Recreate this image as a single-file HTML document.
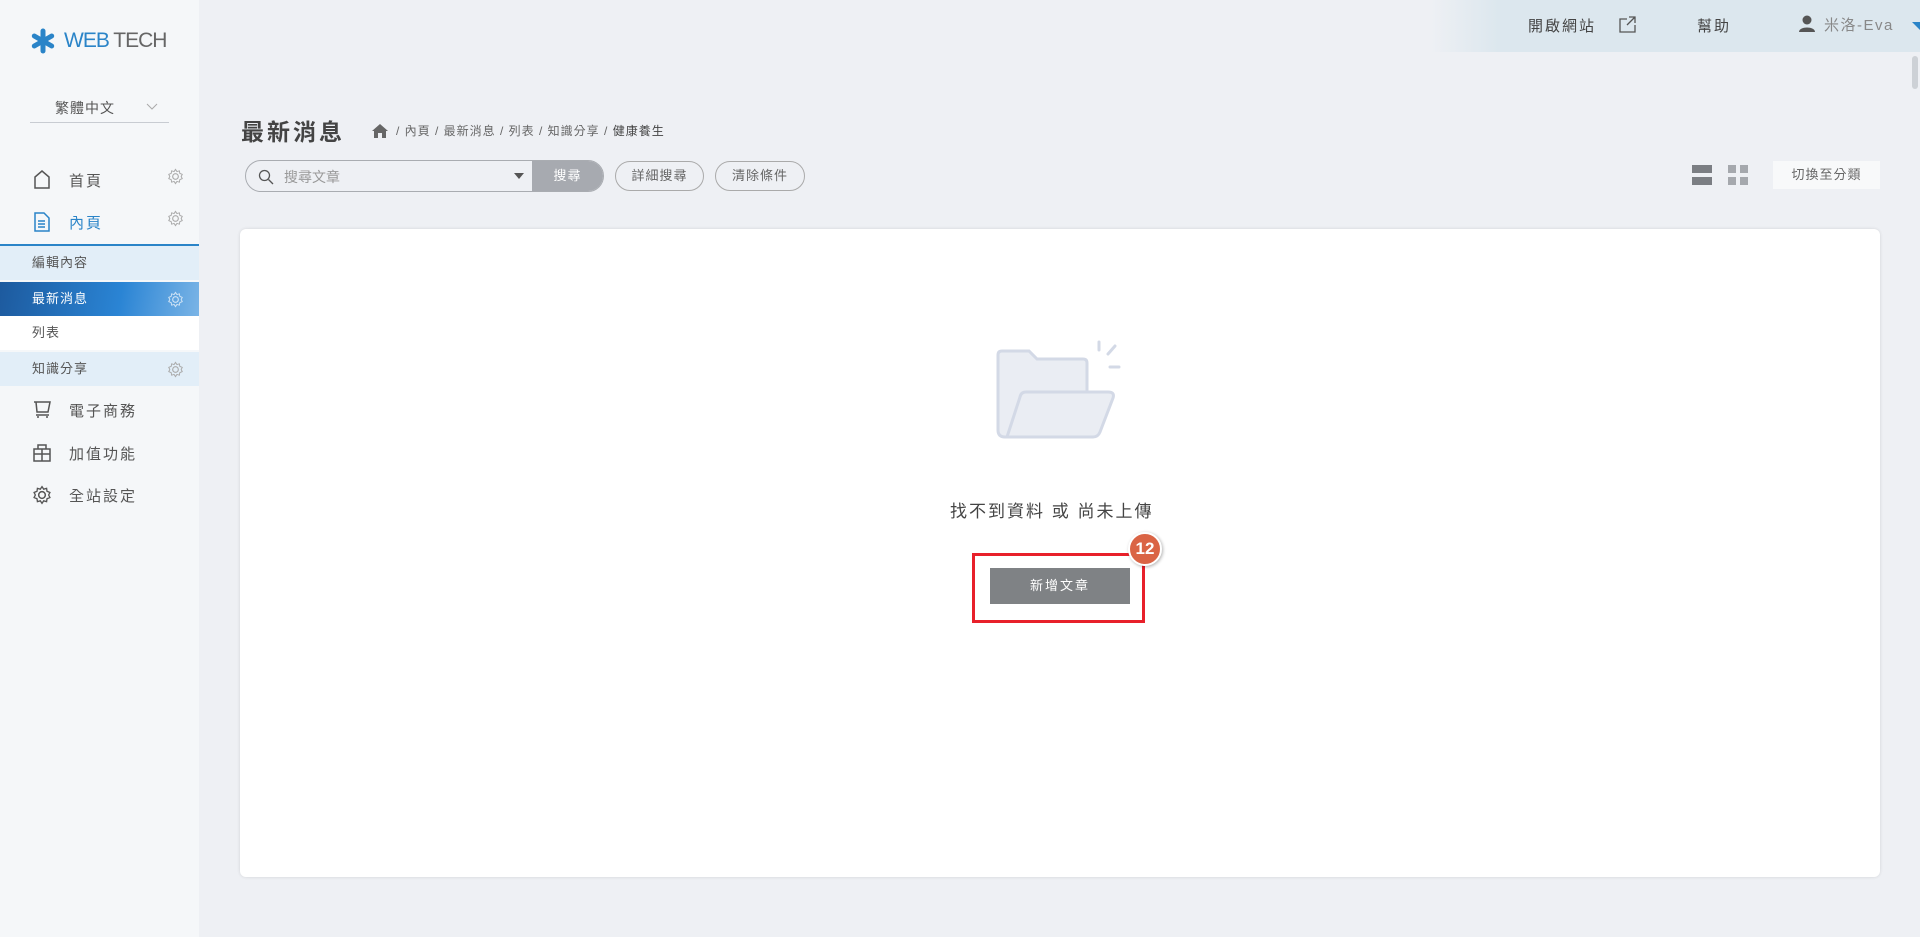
<!DOCTYPE html>
<html><head><meta charset="utf-8"><style>
*{margin:0;padding:0;box-sizing:border-box}
body{width:1920px;height:937px;overflow:hidden;background:#eef0f4;font-family:"Liberation Sans","Noto Sans CJK TC",sans-serif;color:#555;position:relative}
.a{position:absolute}
.side{left:0;top:0;width:199px;height:937px;background:#f5f7f9}
.mi{position:absolute;left:0;width:199px;font-size:15px;color:#555;letter-spacing:2px}
.mi .t{position:absolute;left:69px;top:0}
.sub{position:absolute;left:0;width:199px;height:34px;font-size:13px;line-height:34px;padding-left:32px;letter-spacing:1px;color:#555}
.pill{position:absolute;height:30px;border:1px solid #aaa;border-radius:15px;font-size:13px;line-height:28px;text-align:center;color:#666;letter-spacing:1px}
</style></head><body>
<div class="a side"></div>
<svg class="a" style="left:30px;top:28px" width="26" height="26" viewBox="0 0 26 26"><g stroke="#2a84c8" stroke-width="5" stroke-linecap="round"><line x1="13" y1="3" x2="13" y2="23"/><line x1="4.3" y1="8" x2="21.7" y2="18"/><line x1="4.3" y1="18" x2="21.7" y2="8"/></g></svg>
<div class="a" style="left:64px;top:29px;font-size:21px;color:#2a84c8;letter-spacing:-1px">WEB <span style="color:#666">TECH</span></div>
<div class="a" style="left:55px;top:98px;font-size:14px;color:#555;letter-spacing:1px">繁體中文</div>
<svg class="a" style="left:146px;top:103px" width="12" height="8"><path d="M1 1l5 5 5-5" stroke="#aaa" fill="none"/></svg>
<div class="a" style="left:30px;top:122px;width:139px;height:1px;background:#c8ccd2"></div>
<svg class="a" style="left:33px;top:170px" width="18" height="19"><path d="M2 18V7l7-6 7 6v11z" fill="none" stroke="#555" stroke-width="1.5"/></svg>
<div class="mi" style="top:170px"><span class="t">首頁</span></div>
<svg class="a" style="left:33px;top:212px" width="18" height="20"><path d="M2 1h9l5 5v13H2z M5 9h7 M5 12h7 M5 15h7" fill="none" stroke="#2a84c8" stroke-width="1.5"/></svg>
<div class="mi" style="top:212px;color:#2a84c8"><span class="t">內頁</span></div>
<svg class="a" style="left:167px;top:168px" width="17" height="17" viewBox="0 0 24 24"><circle cx="12" cy="12" r="4" fill="none" stroke="#aaa" stroke-width="1.6"/><path d="M12 2l2 3 3.5-1 .5 3.5 3.5 1.5-1.5 3 1.5 3-3.5 1.5-.5 3.5-3.5-1-2 3-2-3-3.5 1-.5-3.5L2.5 15 4 12 2.5 9 6 7.5 6.5 4 10 5z" fill="none" stroke="#aaa" stroke-width="1.4"/></svg>
<svg class="a" style="left:167px;top:210px" width="17" height="17" viewBox="0 0 24 24"><circle cx="12" cy="12" r="4" fill="none" stroke="#aaa" stroke-width="1.6"/><path d="M12 2l2 3 3.5-1 .5 3.5 3.5 1.5-1.5 3 1.5 3-3.5 1.5-.5 3.5-3.5-1-2 3-2-3-3.5 1-.5-3.5L2.5 15 4 12 2.5 9 6 7.5 6.5 4 10 5z" fill="none" stroke="#aaa" stroke-width="1.4"/></svg>
<div class="a" style="left:0;top:244px;width:199px;height:2px;background:#2a84c8"></div>
<div class="sub" style="top:246px;background:#e2eef8">編輯內容</div>
<div class="sub" style="top:282px;background:linear-gradient(100deg,#1d5a9e 0%,#2a84d4 60%,#7ab4e6 100%);color:#fff">最新消息</div>
<svg class="a" style="left:167px;top:291px" width="17" height="17" viewBox="0 0 24 24"><circle cx="12" cy="12" r="4" fill="none" stroke="#cfe3f5" stroke-width="1.6"/><path d="M12 2l2 3 3.5-1 .5 3.5 3.5 1.5-1.5 3 1.5 3-3.5 1.5-.5 3.5-3.5-1-2 3-2-3-3.5 1-.5-3.5L2.5 15 4 12 2.5 9 6 7.5 6.5 4 10 5z" fill="none" stroke="#cfe3f5" stroke-width="1.4"/></svg>
<div class="sub" style="top:316px;background:#fff">列表</div>
<div class="sub" style="top:352px;background:#e2eef8">知識分享</div>
<svg class="a" style="left:167px;top:361px" width="17" height="17" viewBox="0 0 24 24"><circle cx="12" cy="12" r="4" fill="none" stroke="#aaa" stroke-width="1.6"/><path d="M12 2l2 3 3.5-1 .5 3.5 3.5 1.5-1.5 3 1.5 3-3.5 1.5-.5 3.5-3.5-1-2 3-2-3-3.5 1-.5-3.5L2.5 15 4 12 2.5 9 6 7.5 6.5 4 10 5z" fill="none" stroke="#aaa" stroke-width="1.4"/></svg>
<svg class="a" style="left:33px;top:401px" width="18" height="18"><path d="M1 1h16l-2 10H4L3 1 M5 15v2 M14 15v2 M3 14h13" fill="none" stroke="#555" stroke-width="1.5"/></svg>
<div class="mi" style="top:400px"><span class="t">電子商務</span></div>
<svg class="a" style="left:33px;top:444px" width="18" height="18"><path d="M1 5h16v12H1z M1 10h16 M9 5v12 M5 1h8v4H5z" fill="none" stroke="#555" stroke-width="1.5"/></svg>
<div class="mi" style="top:443px"><span class="t">加值功能</span></div>
<svg class="a" style="left:32px;top:485px" width="20" height="20" viewBox="0 0 24 24"><circle cx="12" cy="12" r="4" fill="none" stroke="#555" stroke-width="1.8"/><path d="M12 2l2 3 3.5-1 .5 3.5 3.5 1.5-1.5 3 1.5 3-3.5 1.5-.5 3.5-3.5-1-2 3-2-3-3.5 1-.5-3.5L2.5 15 4 12 2.5 9 6 7.5 6.5 4 10 5z" fill="none" stroke="#555" stroke-width="1.6"/></svg>
<div class="mi" style="top:485px"><span class="t">全站設定</span></div>
<div class="a" style="left:1430px;top:0;width:490px;height:52px;background:linear-gradient(90deg,rgba(220,231,238,0) 0%,#dce7ee 14%,#dce7ee 100%)"></div>
<div class="a" style="left:1528px;top:15px;font-size:15px;color:#444;letter-spacing:2px">開啟網站</div>
<svg class="a" style="left:1619px;top:16px" width="20" height="17"><path d="M8 3H1v13h15V9 M10 1h6v6 M16 1l-8 8" fill="none" stroke="#555" stroke-width="1.3"/></svg>
<div class="a" style="left:1697px;top:15px;font-size:15px;color:#444;letter-spacing:2px">幫助</div>
<svg class="a" style="left:1798px;top:15px" width="18" height="17"><circle cx="9" cy="5" r="4.5" fill="#555"/><path d="M1 17c0-6 16-6 16 0z" fill="#555"/></svg>
<div class="a" style="left:1824px;top:14px;font-size:15px;color:#888;letter-spacing:1.5px">米洛-Eva</div>
<svg class="a" style="left:1912px;top:22px" width="8" height="8"><path d="M0 0h8v8z" fill="#2a84c8"/></svg>
<div class="a" style="left:1912px;top:56px;width:6px;height:33px;background:#cdd1d6;border-radius:3px"></div>
<div class="a" style="left:241px;top:113px;font-size:23px;font-weight:bold;color:#444;letter-spacing:3px">最新消息</div>
<svg class="a" style="left:372px;top:124px" width="16" height="14"><path d="M8 0L0 7h2v7h4V9h4v5h4V7h2z" fill="#666"/></svg>
<div class="a" style="left:396px;top:122px;font-size:12px;color:#666;letter-spacing:1px">/ 內頁 / 最新消息 / 列表 / 知識分享 / <span style="color:#444">健康養生</span></div>
<div class="a" style="left:245px;top:160px;width:359px;height:32px;border:1px solid #a9acb1;border-radius:16px;background:#eef0f4;overflow:hidden">
<div class="a" style="right:0;top:0;width:71px;height:30px;background:#a7aab0;color:#fff;font-size:13px;line-height:30px;text-align:center;letter-spacing:1px">搜尋</div>
</div>
<svg class="a" style="left:258px;top:169px" width="16" height="16"><circle cx="6.5" cy="6.5" r="5" fill="none" stroke="#555" stroke-width="1.3"/><path d="M10.5 10.5l4.5 4.5" stroke="#555" stroke-width="1.3"/></svg>
<div class="a" style="left:284px;top:167px;font-size:14px;color:#999">搜尋文章</div>
<svg class="a" style="left:514px;top:173px" width="10" height="6"><path d="M0 0h10L5 6z" fill="#555"/></svg>
<div class="pill" style="left:615px;top:161px;width:89px">詳細搜尋</div>
<div class="pill" style="left:715px;top:161px;width:90px">清除條件</div>
<div class="a" style="left:1692px;top:165px;width:20px;height:8px;background:#7b7e83"></div>
<div class="a" style="left:1692px;top:177px;width:20px;height:8px;background:#7b7e83"></div>
<div class="a" style="left:1728px;top:165px;width:8px;height:8px;background:#a5a8ad"></div>
<div class="a" style="left:1740px;top:165px;width:8px;height:8px;background:#a5a8ad"></div>
<div class="a" style="left:1728px;top:177px;width:8px;height:8px;background:#a5a8ad"></div>
<div class="a" style="left:1740px;top:177px;width:8px;height:8px;background:#a5a8ad"></div>
<div class="a" style="left:1773px;top:161px;width:107px;height:28px;background:#f8f9fa;font-size:13px;line-height:28px;text-align:center;color:#666;letter-spacing:1px">切換至分類</div>
<div class="a" style="left:240px;top:229px;width:1640px;height:648px;background:#fff;border-radius:6px;box-shadow:0 0 3px rgba(0,0,0,.12)"></div>
<svg class="a" style="left:995px;top:340px" width="130" height="102" viewBox="0 0 130 102"><path d="M3 15q0-4 4-4h27l8 8h46q4 0 4 4v70q0 4-4 4H10q-7 0-7-7z" fill="#eaedf3" stroke="#d3d9e6" stroke-width="3"/><path d="M12 97l13-40q1-5 6-5h82q7 0 5 6l-13 34q-2 5-7 5z" fill="#eaedf3" stroke="#d3d9e6" stroke-width="3"/><g stroke="#d3d9e6" stroke-width="3" stroke-linecap="round"><path d="M104 2v8 M120 6l-7 8 M115 27h9"/></g></svg>
<div class="a" style="left:950px;top:497px;font-size:17px;color:#444;letter-spacing:2px;white-space:nowrap">找不到資料 或 尚未上傳</div>
<div class="a" style="left:972px;top:553px;width:173px;height:70px;border:3px solid #e8202a"></div>
<div class="a" style="left:990px;top:568px;width:140px;height:36px;background:#7f8285;color:#fff;font-size:13px;line-height:36px;text-align:center;letter-spacing:2px">新增文章</div>
<div class="a" style="left:1128px;top:532px;width:34px;height:34px;border-radius:50%;background:#da6445;border:2px solid #fff;box-shadow:1px 1px 3px rgba(0,0,0,.3);color:#fff;font-weight:bold;font-size:17px;line-height:30px;text-align:center">12</div>
</body></html>
